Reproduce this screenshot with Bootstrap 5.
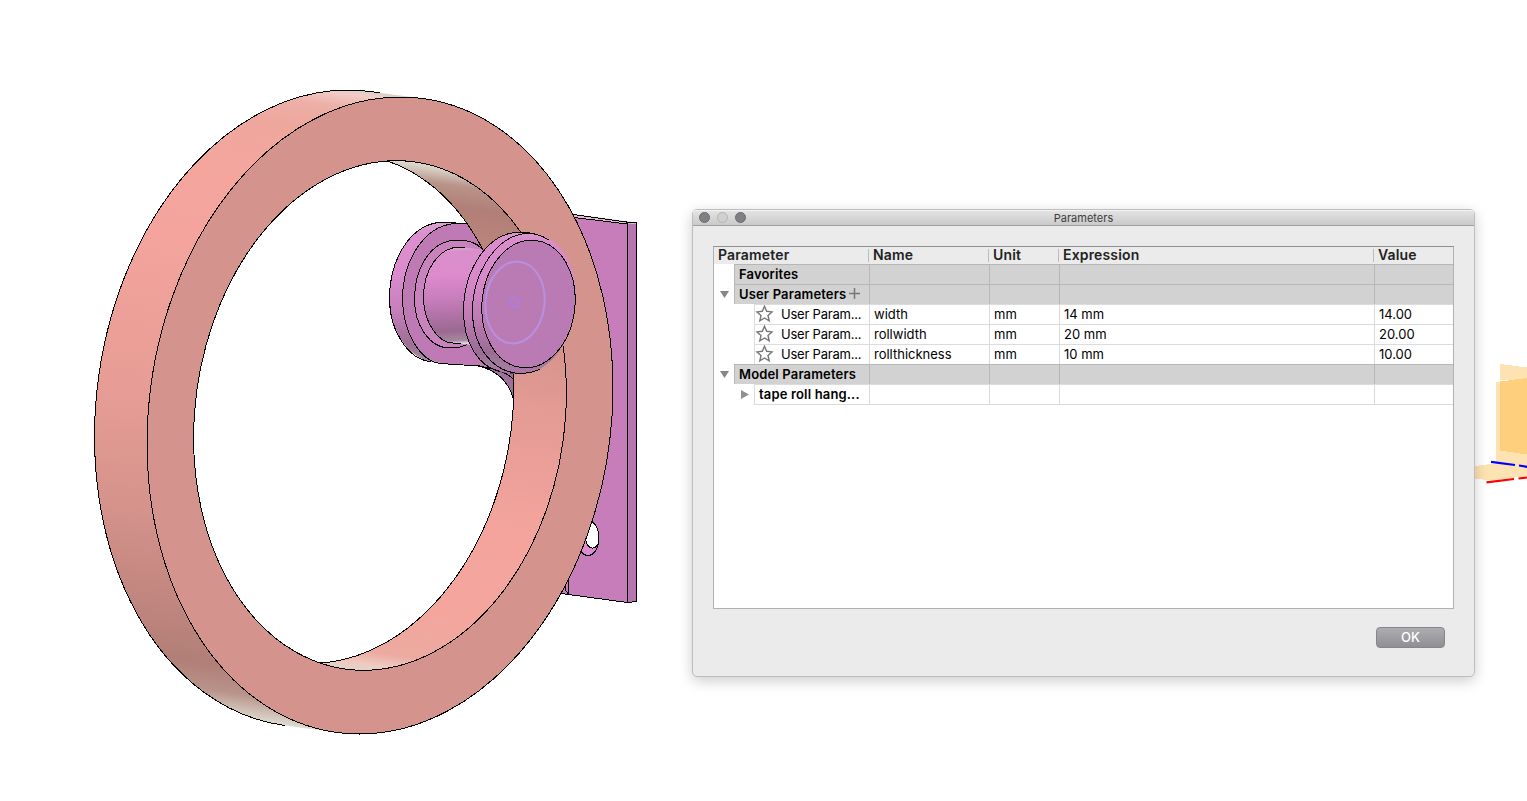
<!DOCTYPE html>
<html lang="en">
<head>
<meta charset="utf-8">
<title>Parameters</title>
<link href="https://cdn.jsdelivr.net/npm/bootstrap@5.3.0/dist/css/bootstrap.min.css" rel="stylesheet">
<style>
body{width:1527px;height:801px;font-family:Inter,sans-serif;font-size:13px;color:#000;background:#fff}
.scene{width:1527px;height:801px}
.scene .ln{fill:none;stroke:#000;stroke-width:1;shape-rendering:crispEdges}
.window{left:692px;top:209px;width:783px;height:468px;background:#ebebeb;border:1px solid #bdbdbd;border-radius:5px;box-shadow:0 4px 14px rgba(0,0,0,.2)}
.titlebar{height:16px;padding-top:2px;background:linear-gradient(#e4e4e4,#cacaca);border-bottom:1px solid #a0a0a0;border-radius:4px 4px 0 0;box-shadow:inset 0 1px #f3f3f3;font-size:11px;color:#3c3c3c}
.lights{left:6px;top:2px;gap:7px}
.lights i{width:11px;height:11px;border-radius:50%;background:#808084;border:1px solid #6b6b6f}
.lights i.off{background:#d0d0d0;border-color:#b5b5b5}
.sheet{margin:20px 20px 0;width:741px;height:363px;background:#fff;border:1px solid #b1b1b1;border-top-color:#8f8f8f}
.heads{height:17px;background:#ebebeb;font-size:14px;font-weight:600;color:#222;line-height:15px;letter-spacing:.16px}
.c1{width:155px}.c2{width:120px}.c3{width:70px}.c4{width:315px}.c5{width:79px}
.heads>div{padding-left:4px;position:relative}
.heads>div+div::before{content:"";position:absolute;left:-1px;top:2px;width:1px;height:13px;background:#bcbcbc}
.line{height:20px;line-height:19px}
.line>div{border-top:1px solid #dcdcdc;white-space:nowrap}
.line>div+div{border-left:1px solid #d9d9d9;padding-left:4px}
.line>.c1{border-top:0}
.tick{width:20px;flex:none}
.label-cell{border-top:1px solid #dcdcdc;border-left:1px solid #dcdcdc;flex:1;min-width:0;padding-left:4px}
.tight{letter-spacing:-.22px}
.group>div{background:#d2d2d2;border-top-color:#b7b7b7}
.group>div+div{border-left-color:#b7b7b7}
.group>.c1{background:#fff}
.group .label-cell{background:#d2d2d2;border-color:#b7b7b7}
.group,.strong{font-weight:600;letter-spacing:.16px}
.last>div+div,.last .label-cell{border-bottom:1px solid #dcdcdc}
.last>div,.last{height:21px}
.okbtn{width:69px;height:21px;margin:18px 29px 0 0;border:1px solid #85858a;border-radius:4px;background:linear-gradient(#acacb1,#8f8f94);color:#fff;font-size:13px;line-height:19px;font-weight:500;padding:0}
svg{display:block}
</style>
</head>
<body class="position-relative overflow-hidden m-0">
<svg class="scene" viewBox="0 0 1527 801" aria-hidden="true">
<defs>
<linearGradient id="outer" gradientUnits="userSpaceOnUse" x1="370" y1="91.5" x2="285.4" y2="725.6">
<stop offset="0" stop-color="#d8d0c4"/><stop offset=".008" stop-color="#f2cdc8"/><stop offset=".03" stop-color="#ecafa6"/><stop offset=".07" stop-color="#eea79d"/><stop offset=".15" stop-color="#f4a69d"/><stop offset=".26" stop-color="#f4a49d"/><stop offset=".53" stop-color="#e59c94"/><stop offset=".69" stop-color="#d5938c"/><stop offset=".81" stop-color="#c48881"/><stop offset=".92" stop-color="#b17f77"/><stop offset=".96" stop-color="#b8938a"/><stop offset="1" stop-color="#dedbd0"/>
</linearGradient>
<linearGradient id="inner" gradientUnits="userSpaceOnUse" x1="361.6" y1="155" x2="293.4" y2="662">
<stop offset="0" stop-color="#dedbd0"/><stop offset=".01" stop-color="#d4cbc0"/><stop offset=".035" stop-color="#b99389"/><stop offset=".076" stop-color="#b17f77"/><stop offset=".2" stop-color="#c48881"/><stop offset=".32" stop-color="#d5938c"/><stop offset=".44" stop-color="#e39b94"/><stop offset=".7" stop-color="#f4a49d"/><stop offset=".87" stop-color="#f4a69d"/><stop offset=".96" stop-color="#ebaaa0"/><stop offset=".985" stop-color="#f0c9c1"/><stop offset="1" stop-color="#dfd5c9"/>
</linearGradient>
<linearGradient id="base" x1="0" y1="0" x2="0" y2="1"><stop offset="0" stop-color="#d9a5cf"/><stop offset=".08" stop-color="#dc8fce"/><stop offset=".35" stop-color="#dc8bce"/><stop offset=".6" stop-color="#c880bd"/><stop offset=".85" stop-color="#9f6e96"/><stop offset=".95" stop-color="#a58a9d"/><stop offset="1" stop-color="#d9ced4"/></linearGradient>
<linearGradient id="flange" x1="0" y1="0" x2="0" y2="1"><stop offset="0" stop-color="#d79bcb"/><stop offset=".06" stop-color="#dc8bce"/><stop offset=".35" stop-color="#d888ca"/><stop offset=".6" stop-color="#c07ab5"/><stop offset=".85" stop-color="#9b6b94"/><stop offset=".93" stop-color="#a27b9d"/><stop offset="1" stop-color="#b076a9"/></linearGradient>
<linearGradient id="stem" x1="0" y1="0" x2=".04" y2="1"><stop offset="0" stop-color="#ddc9d3"/><stop offset=".06" stop-color="#d98fcb"/><stop offset=".3" stop-color="#dd8bce"/><stop offset=".55" stop-color="#c67dbb"/><stop offset=".87" stop-color="#9b6992"/><stop offset=".97" stop-color="#a6879f"/><stop offset="1" stop-color="#ddd6d8"/></linearGradient>
<clipPath id="hole"><path d="M396.4 160.7A184 254.6 7.73 0 1 363.6 670.3A184 254.6 7.73 0 1 396.4 160.7Z"/></clipPath>
<clipPath id="bore"><ellipse cx="588" cy="538" rx="11" ry="17.5"/></clipPath>
</defs>
<!-- construction planes -->
<g shape-rendering="crispEdges">
<path fill="#fde2b2" d="M1470 466.500L1500 463L1527 467V476L1492 480.500L1470 478Z"/>
<path fill="#fde2b2" d="M1496 382L1527 378V466L1496 468.500Z"/>
<path fill="#fde2b2" d="M1500 364L1527 367.500V380H1500Z"/>
<path fill="#fecf7d" d="M1500 381.500L1527 378V454.500L1500 450.500Z"/>
</g>
<path stroke="#00f" stroke-width="2.200" d="M1491 461.800L1515 465M1519 465.500L1527 466.800"/>
<path stroke="#f00" stroke-width="2.200" d="M1486.500 482.300L1514 479M1518.500 478.500L1527 477.500"/>
<!-- wall plate -->
<path fill="#c87dbb" d="M550 214L627 224V602.500L550 592Z"/>
<path fill="#ddbfd3" d="M560 212L573 214L636 222.500L627 224L573 217Z"/>
<path fill="#b876b1" d="M627 223.500H636.500V601.500L627 602.500Z"/>
<path class="ln" d="M560 212.500L573 214.500L630 222.500H636.500V601.500L627.500 602.500L550 592M570 217L627.500 224V602.500M568.500 565V594M565 575V589L568 594"/>
<g clip-path="url(#bore)"><path fill="#dd8dcf" d="M570 518H602V560H570Z"/><ellipse cx="592.500" cy="535" rx="7.500" ry="13" fill="#fff"/><ellipse class="ln" cx="592.500" cy="535" rx="7.500" ry="13"/></g>
<ellipse class="ln" cx="588" cy="538" rx="11" ry="17.500"/>
<!-- hanger base -->
<path fill="url(#base)" d="M470 224L445 222C409 222 389.500 262 389.500 298C389.500 334 412 362 437 362.500L480 366L500 300Z"/>
<path fill="#bf79b5" d="M470 223.500L455 224C422 226 402.500 264 402.500 298C402.500 333 421 362 447 364L480 366L514 374L540 300Z"/>
<path fill="#9f7098" d="M478 366C500 371 509 384 513 398V372Z"/>
<path class="ln" d="M467 224L445 222C409 222 389.500 262 389.500 298C389.500 332 409 360 431 361.500M467 223.500H455C422 226 402.500 264 402.500 298C402.500 333 421 362 441 363.500L455 364.500L480 366L514 374M478 366C500 371 509 384 513 398V372M490 368Q505 371 513 379"/>
<path fill="#ca82bf" d="M485 249C478 242 466 240 458 240C430 240 414.500 269 414.500 299C414.500 326 430 348 450 348C458 348 464 347 470 343Z"/>
<path class="ln" d="M482 249C476 242 466 240 458 240C430 240 414.500 269 414.500 299C414.500 326 430 348 450 348C458 348 462 347 467 344.500"/>
<path fill="url(#stem)" d="M486 250L459 247C437 248 423.500 272 423.500 297C423.500 322 438 343 453 343L474 345L500 310Z"/>
<path class="ln" d="M465 247H459C437 248 423.500 272 423.500 297C423.500 322 438 343 453 343L461 344"/>
<!-- tape roll -->
<g clip-path="url(#hole)"><path fill="url(#inner)" fill-rule="evenodd" d="M150 100H620V720H150ZM343.900 153.700A184 254.600 7.730 0 1 311.100 663.300A184 254.600 7.730 0 1 343.900 153.700Z"/>
<path class="ln" d="M343.900 153.700A184 254.600 7.730 0 1 311.100 663.300"/></g>
<path fill="url(#outer)" d="M370 91.500A230.100 318.500 7.730 0 0 285 725.500L337.400 732.500A230.100 318.500 7.730 0 1 422.600 98.500Z"/>
<path class="ln" d="M380 92.800L370 91.500A230.100 318.500 7.730 0 0 285 725.500"/>
<path fill="#d5938d" fill-rule="evenodd" d="M400.500 97A230.100 318.500 7.730 0 1 359.500 734A230.100 318.500 7.730 0 1 400.500 97ZM396.400 160.700A184 254.600 7.730 0 1 363.600 670.300A184 254.600 7.730 0 1 396.400 160.700Z"/>
<path class="ln" d="M400.500 97A230.100 318.500 7.730 0 1 359.500 734A230.100 318.500 7.730 0 1 400.500 97ZM396.400 160.700A184 254.600 7.730 0 1 363.600 670.300A184 254.600 7.730 0 1 396.400 160.700Z"/>
<!-- front flange -->
<path fill="url(#flange)" d="M521 232C486 232 463.500 272 463.500 311C463.500 345 482 371 510 373.500L523 374C553 372 576 335 576 295C576 260 556 233 528 233Z"/>
<path class="ln" d="M549 240Q538 233 521 232C486 232 463.500 272 463.500 311C463.500 345 480 367 500 371.500"/>
<path class="ln" d="M535 234L526 233.500C495 236 472.500 275 472.500 311C472.500 347 493 373 521 373.500Q532 373 540 369"/>
<g transform="rotate(6 528.500 304)"><ellipse cx="528.500" cy="304" rx="46.500" ry="64" fill="#ba7bb5"/><ellipse class="ln" cx="528.500" cy="304" rx="46.500" ry="64"/></g>
<ellipse cx="515" cy="302.500" rx="29.500" ry="41" transform="rotate(6 515 302.500)" fill="none" stroke="#b98fe0" stroke-width="2"/>
<circle cx="515" cy="302.500" r="4.700" fill="none" stroke="#ae7cdc" stroke-width="2.200"/>
</svg>

<section class="window position-absolute d-flex flex-column">
 <header class="titlebar position-relative d-flex justify-content-center align-items-center"><span class="lights position-absolute d-flex"><i></i><i class="off"></i><i></i></span><span>Parameters</span></header>
 <div class="sheet">
  <div class="heads d-flex"><div class="c1">Parameter</div><div class="c2">Name</div><div class="c3">Unit</div><div class="c4">Expression</div><div class="c5">Value</div></div>
  <div class="line group d-flex"><div class="c1 d-flex"><span class="tick"></span><span class="label-cell">Favorites</span></div><div class="c2"></div><div class="c3"></div><div class="c4"></div><div class="c5"></div></div>
  <div class="line group d-flex"><div class="c1 d-flex"><span class="tick"><svg width="20" height="20"><path fill="#868686" d="M6 7h9l-4.500 7z"/></svg></span><span class="label-cell d-flex">User Parameters<svg width="15" height="19"><path stroke="#777" stroke-width="1.500" d="M3 8.500h11M8.500 3v11"/></svg></span></div><div class="c2"></div><div class="c3"></div><div class="c4"></div><div class="c5"></div></div>
  <div class="line d-flex"><div class="c1 d-flex"><span class="tick"></span><span class="tick"></span><span class="label-cell tight d-flex ps-0"><svg width="26" height="19"><path id="star" fill="none" stroke="#777" stroke-width="1.400" d="M9.500 1.300L11.700 6.300L17 6.900L13 10.500L14.200 15.800L9.500 13L4.800 15.800L6 10.500L2 6.900L7.300 6.300Z"/></svg>User Param...</span></div><div class="c2">width</div><div class="c3">mm</div><div class="c4">14 mm</div><div class="c5">14.00</div></div>
  <div class="line d-flex"><div class="c1 d-flex"><span class="tick"></span><span class="tick"></span><span class="label-cell tight d-flex ps-0"><svg width="26" height="19"><use href="#star"/></svg>User Param...</span></div><div class="c2">rollwidth</div><div class="c3">mm</div><div class="c4">20 mm</div><div class="c5">20.00</div></div>
  <div class="line d-flex"><div class="c1 d-flex"><span class="tick"></span><span class="tick"></span><span class="label-cell tight d-flex ps-0"><svg width="26" height="19"><use href="#star"/></svg>User Param...</span></div><div class="c2">rollthickness</div><div class="c3">mm</div><div class="c4">10 mm</div><div class="c5">10.00</div></div>
  <div class="line group d-flex"><div class="c1 d-flex"><span class="tick"><svg width="20" height="20"><path fill="#868686" d="M6 7h9l-4.500 7z"/></svg></span><span class="label-cell">Model Parameters</span></div><div class="c2"></div><div class="c3"></div><div class="c4"></div><div class="c5"></div></div>
  <div class="line strong last d-flex"><div class="c1 d-flex"><span class="tick"></span><span class="tick"><svg width="20" height="20"><path fill="#909090" d="M7 6v9l8-4.500z"/></svg></span><span class="label-cell">tape roll hang...</span></div><div class="c2"></div><div class="c3"></div><div class="c4"></div><div class="c5"></div></div>
 </div>
 <button class="okbtn btn align-self-end" type="button">OK</button>
</section>
<script src="https://cdn.jsdelivr.net/npm/bootstrap@5.3.0/dist/js/bootstrap.bundle.min.js"></script>
</body>
</html>
